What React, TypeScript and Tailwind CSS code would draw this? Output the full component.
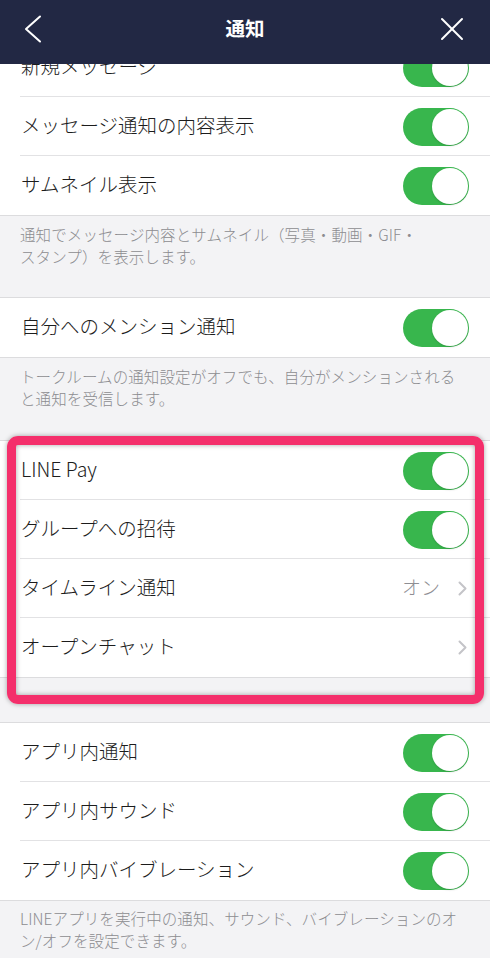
import React from 'react';

const font = { fontFamily: '"Noto Sans CJK JP", "Noto Sans", sans-serif' };

function Toggle() {
  return (
    <div className="relative w-[66px] h-[38px] rounded-full bg-[#38b64d]">
      <div className="absolute right-[1px] top-[1px] w-[36px] h-[36px] rounded-full bg-white shadow-[0_1px_2px_rgba(0,0,0,0.15)]" />
    </div>
  );
}

function Chevron() {
  return (
    <svg width="9" height="15" viewBox="0 0 9 15" fill="none">
      <polyline points="1.5,1.5 7.5,7.5 1.5,13.5" stroke="#c4c4c8" strokeWidth="2" strokeLinecap="round" strokeLinejoin="round" />
    </svg>
  );
}

type RowProps = { label: string; right: 'toggle' | 'on' | 'chevron'; last?: boolean; className?: string };

function Row({ label, right, last, className }: RowProps) {
  return (
    <div className={`relative h-[59px] flex items-center justify-between pl-[21px] pr-[21px] ${className ?? ''}`}>
      <span className="text-[19.5px] text-[#1c1c1c] font-light -mt-[3px]">{label}</span>
      {right === 'toggle' && <Toggle />}
      {right === 'on' && (
        <div className="flex items-center gap-[18px] pr-[2px]">
          <span className="text-[19px] text-[#8e8e93] font-light -mt-[3px]">オン</span>
          <Chevron />
        </div>
      )}
      {right === 'chevron' && (
        <div className="pr-[2px]">
          <Chevron />
        </div>
      )}
      {!last && <div className="absolute left-[20px] right-0 bottom-0 h-px bg-[#e2e2e4]" />}
    </div>
  );
}

function Note({ children, className }: { children: React.ReactNode; className?: string }) {
  return (
    <div className={`px-[20px] text-[15.5px] leading-[22px] tracking-[0.1px] whitespace-nowrap text-[#8c8c90] font-light ${className ?? ''}`}>
      {children}
    </div>
  );
}

export default function App() {
  return (
    <div className="relative w-[490px] h-[958px] overflow-hidden bg-[#f3f3f5]" style={font}>
      {/* Header */}
      <header className="relative z-10 h-[64px] bg-[#222844] flex items-center justify-between px-[24px] pb-[7px]">
        <svg width="18" height="28" viewBox="0 0 18 28" fill="none">
          <polyline points="16,1.5 2,14 16,26.5" stroke="#ffffff" strokeWidth="2" strokeLinecap="round" strokeLinejoin="round" />
        </svg>
        <span className="absolute left-0 right-0 top-[13px] text-center text-[19.5px] font-bold text-white pointer-events-none">通知</span>
        <svg width="24" height="24" viewBox="0 0 24 24" fill="none" className="mr-[2px]">
          <line x1="2" y1="2" x2="22" y2="22" stroke="#ffffff" strokeWidth="2" strokeLinecap="round" />
          <line x1="22" y1="2" x2="2" y2="22" stroke="#ffffff" strokeWidth="2" strokeLinecap="round" />
        </svg>
      </header>

      <div className="flex flex-col">
        {/* Section 1 */}
        <div className="bg-white border-b border-[#dcdcde] mt-[-26px]">
          <Row label="新規メッセージ" right="toggle" />
          <Row label="メッセージ通知の内容表示" right="toggle" />
          <Row label="サムネイル表示" right="toggle" last />
        </div>
        <Note className="h-[81px] pt-[7px]">
          通知でメッセージ内容とサムネイル（写真・動画・GIF・
          <br />
          スタンプ）を表示します。
        </Note>

        {/* Section 2 */}
        <div className="bg-white border-y border-[#dcdcde]">
          <Row label="自分へのメンション通知" right="toggle" last />
        </div>
        <Note className="h-[82px] pt-[7px]">
          トークルームの通知設定がオフでも、自分がメンションされる
          <br />
          と通知を受信します。
        </Note>

        {/* Section 3 */}
        <div className="bg-white border-y border-[#dcdcde]">
          <Row label="LINE Pay" right="toggle" />
          <Row label="グループへの招待" right="toggle" />
          <Row label="タイムライン通知" right="on" />
          <Row label="オープンチャット" right="chevron" last className="h-[57px]" />
        </div>
        <div className="h-[44px]" />

        {/* Section 4 */}
        <div className="bg-white border-y border-[#dcdcde]">
          <Row label="アプリ内通知" right="toggle" />
          <Row label="アプリ内サウンド" right="toggle" />
          <Row label="アプリ内バイブレーション" right="toggle" last />
        </div>
        <Note className="pt-[6px]">
          LINEアプリを実行中の通知、サウンド、バイブレーションのオ
          <br />
          ン/オフを設定できます。
        </Note>
      </div>

      {/* Highlight frame */}
      <div className="absolute left-[7px] top-[436px] w-[477px] h-[268px] rounded-[11px] border-[9px] border-[#f42f6b] shadow-[0_0_5px_rgba(0,0,0,0.35),inset_0_0_5px_rgba(0,0,0,0.35)] pointer-events-none" />
    </div>
  );
}
